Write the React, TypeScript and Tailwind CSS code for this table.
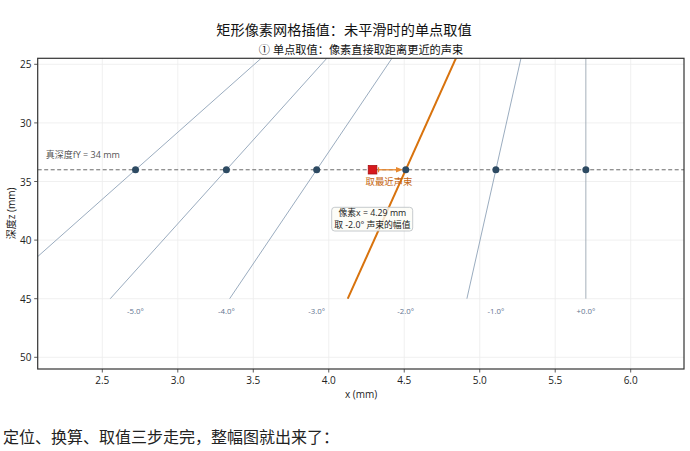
import type React from 'react';

// plot area (px) and data -> px mapping
const LEFT = 37.7;
const RIGHT = 684;
const TOP = 58.3;
const BOTTOM = 369;

const px = (mm: number) => 102.3 + (mm - 2.5) * 150.97;
const py = (z: number) => 64.3 + (z - 25) * 11.72;

const DEPTH = 34;
const PIXEL_X = 4.29;

const beams = [
  { angle: -5, x: 2.72 },
  { angle: -4, x: 3.322 },
  { angle: -3, x: 3.92 },
  { angle: -2, x: 4.51 },
  { angle: -1, x: 5.107 },
  { angle: 0, x: 5.703 },
];

const xTicks = [2.5, 3.0, 3.5, 4.0, 4.5, 5.0, 5.5, 6.0];
const yTicks = [25, 30, 35, 40, 45, 50];

const beamX = (b: { angle: number; x: number }, z: number) =>
  b.x + (z - DEPTH) * Math.tan((b.angle * Math.PI) / 180);

const Chart: React.FC = () => {
  const yDepth = py(DEPTH);
  const nearest = beams[3];

  return (
    <svg
      width={690}
      height={405}
      viewBox="0 0 690 405"
      className="block font-['Open_Sans','Noto_Sans_CJK_SC',sans-serif]"
    >
      <defs>
        <clipPath id="plot">
          <rect x={LEFT} y={TOP} width={RIGHT - LEFT} height={BOTTOM - TOP} />
        </clipPath>
      </defs>

      {/* titles */}
      <text x={344} y={29} fontSize={14.2} fill="#111" textAnchor="middle" dominantBaseline="central">
        矩形像素网格插值：未平滑时的单点取值
      </text>
      <text x={361} y={49} fontSize={11.2} fill="#111" textAnchor="middle" dominantBaseline="central">
        ① 单点取值：像素直接取距离更近的声束
      </text>

      {/* grid */}
      <g stroke="#ececec" strokeWidth={0.8}>
        {xTicks.map((t) => (
          <line key={`gx${t}`} x1={px(t)} x2={px(t)} y1={TOP} y2={BOTTOM} />
        ))}
        {yTicks.map((t) => (
          <line key={`gy${t}`} x1={LEFT} x2={RIGHT} y1={py(t)} y2={py(t)} />
        ))}
      </g>

      <g clipPath="url(#plot)">
        {/* beams */}
        {beams.map((b) => (
          <line
            key={`beam${b.angle}`}
            x1={px(beamX(b, 15))}
            y1={py(15)}
            x2={px(beamX(b, 45))}
            y2={py(45)}
            stroke={b.angle === 0 ? '#9ca7b2' : '#8fa3b8'}
            strokeWidth={0.9}
          />
        ))}

        {/* depth line */}
        <line
          x1={LEFT}
          x2={RIGHT}
          y1={yDepth}
          y2={yDepth}
          stroke="#6b6b6b"
          strokeWidth={1}
          strokeDasharray="4 2.5"
        />

        {/* nearest beam highlight */}
        <line
          x1={px(beamX(nearest, 15))}
          y1={py(15)}
          x2={px(beamX(nearest, 45))}
          y2={py(45)}
          stroke="#d9730d"
          strokeWidth={2}
        />
      </g>

      {/* intersection dots */}
      {beams.map((b) => (
        <circle key={`dot${b.angle}`} cx={px(b.x)} cy={yDepth} r={3.5} fill="#2d4a62" />
      ))}

      {/* arrow pixel -> nearest beam */}
      <g stroke="#e8892f" strokeWidth={1.3}>
        <line x1={378.5} x2={397} y1={yDepth} y2={yDepth} />
        <line x1={378.5} x2={378.5} y1={yDepth - 2.5} y2={yDepth + 2.5} />
      </g>
      <polygon
        points={`${403},${yDepth} ${396},${yDepth - 2.8} ${396},${yDepth + 2.8}`}
        fill="#e8892f"
      />

      {/* pixel marker */}
      <rect
        x={px(PIXEL_X) - 4.3}
        y={yDepth - 4.2}
        width={8.6}
        height={8.4}
        fill="#d7191c"
        stroke="#a80d10"
        strokeWidth={0.8}
      />

      <text x={389} y={181.5} fontSize={9.4} fill="#c5650f" textAnchor="middle" dominantBaseline="central">
        取最近声束
      </text>

      {/* info box */}
      <rect
        x={331.7}
        y={207.3}
        width={81}
        height={23.7}
        rx={3}
        fill="#fdfdf6"
        fillOpacity={0.8}
        stroke="#b8bcc2"
        strokeWidth={0.8}
      />
      <text x={372.3} y={213.3} fontSize={8.8} fill="#222" textAnchor="middle" dominantBaseline="central">
        像素x = 4.29 mm
      </text>
      <text x={372.3} y={224.6} fontSize={8.8} fill="#222" textAnchor="middle" dominantBaseline="central">
        取 -2.0° 声束的幅值
      </text>

      <text x={45.7} y={154.3} fontSize={9} fill="#555" dominantBaseline="central">
        真深度fY = 34 mm
      </text>

      {/* beam labels */}
      {beams.map((b) => (
        <text
          key={`lbl${b.angle}`}
          x={px(b.x)}
          y={311}
          fontSize={7.8}
          fill="#5f7490"
          textAnchor="middle"
          dominantBaseline="central"
        >
          {`${b.angle < 0 ? '-' : '+'}${Math.abs(b.angle).toFixed(1)}°`}
        </text>
      ))}

      {/* frame */}
      <rect
        x={LEFT}
        y={TOP}
        width={RIGHT - LEFT}
        height={BOTTOM - TOP}
        fill="none"
        stroke="#333"
        strokeWidth={1.2}
      />

      {/* y axis */}
      {yTicks.map((t) => (
        <g key={`yt${t}`}>
          <line x1={LEFT - 3.5} x2={LEFT} y1={py(t)} y2={py(t)} stroke="#333" strokeWidth={0.8} />
          <text x={31.5} y={py(t)} fontSize={10} fill="#222" textAnchor="end" dominantBaseline="central">
            {t}
          </text>
        </g>
      ))}
      <text
        x={11}
        y={213.5}
        fontSize={10}
        fill="#222"
        textAnchor="middle"
        dominantBaseline="central"
        transform="rotate(-90 11 213.5)"
      >
        深度z (mm)
      </text>

      {/* x axis */}
      {xTicks.map((t) => (
        <g key={`xt${t}`}>
          <line x1={px(t)} x2={px(t)} y1={BOTTOM} y2={BOTTOM + 3.5} stroke="#333" strokeWidth={0.8} />
          <text x={px(t)} y={380} fontSize={10} fill="#222" textAnchor="middle" dominantBaseline="central">
            {t.toFixed(1)}
          </text>
        </g>
      ))}
      <text x={361} y={393.5} fontSize={10} fill="#222" textAnchor="middle" dominantBaseline="central">
        x (mm)
      </text>
    </svg>
  );
};

const App: React.FC = () => {
  return (
    <div className="h-[451px] w-[690px] overflow-hidden bg-white">
      <Chart />
      <p className="mt-[20px] pl-[3px] font-['Noto_Sans_CJK_SC',sans-serif] text-[16px] leading-[22px] text-[#222]">
        定位、换算、取值三步走完，整幅图就出来了：
      </p>
    </div>
  );
};

export default App;
